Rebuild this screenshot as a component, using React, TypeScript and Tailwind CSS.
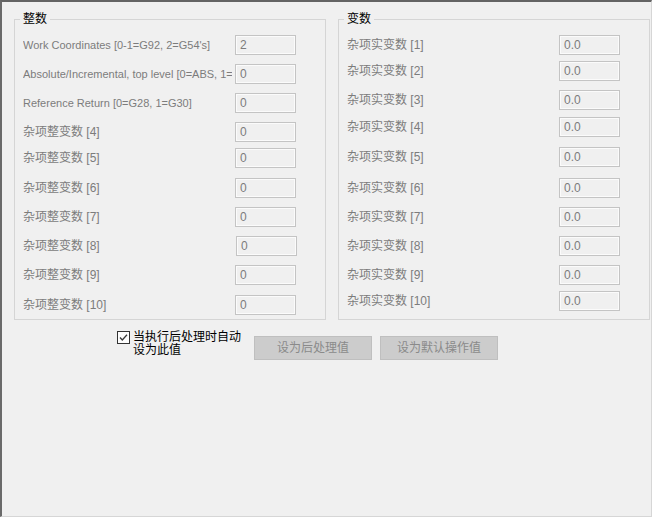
const FONT = "font-['Liberation_Sans','Noto_Sans_CJK_SC',sans-serif]";

type Row = { label: string; value: string; gap: string; latin?: boolean; shift?: string };

const intRows: Row[] = [
  { label: "Work Coordinates [0-1=G92, 2=G54's]", value: "2", gap: "mt-0", latin: true },
  { label: "Absolute/Incremental, top level [0=ABS, 1=INC]", value: "0", gap: "mt-[9px]", latin: true },
  { label: "Reference Return [0=G28, 1=G30]", value: "0", gap: "mt-[9px]", latin: true },
  { label: "杂项整变数 [4]", value: "0", gap: "mt-[9px]" },
  { label: "杂项整变数 [5]", value: "0", gap: "mt-[6px]" },
  { label: "杂项整变数 [6]", value: "0", gap: "mt-[10px]" },
  { label: "杂项整变数 [7]", value: "0", gap: "mt-[9px]" },
  { label: "杂项整变数 [8]", value: "0", gap: "mt-[9px]", shift: "ml-px" },
  { label: "杂项整变数 [9]", value: "0", gap: "mt-[9px]" },
  { label: "杂项整变数 [10]", value: "0", gap: "mt-[10px]" },
];

const realRows: Row[] = [
  { label: "杂项实变数 [1]", value: "0.0", gap: "mt-0" },
  { label: "杂项实变数 [2]", value: "0.0", gap: "mt-[6px]" },
  { label: "杂项实变数 [3]", value: "0.0", gap: "mt-[9px]" },
  { label: "杂项实变数 [4]", value: "0.0", gap: "mt-[7px]" },
  { label: "杂项实变数 [5]", value: "0.0", gap: "mt-[10px]" },
  { label: "杂项实变数 [6]", value: "0.0", gap: "mt-[11px]" },
  { label: "杂项实变数 [7]", value: "0.0", gap: "mt-[9px]" },
  { label: "杂项实变数 [8]", value: "0.0", gap: "mt-[9px]" },
  { label: "杂项实变数 [9]", value: "0.0", gap: "mt-[9px]" },
  { label: "杂项实变数 [10]", value: "0.0", gap: "mt-[6px]" },
];

function Field({ row }: { row: Row }) {
  return (
    <div className={`flex h-[20px] items-center ${row.gap}`}>
      <div className="w-[212px] shrink-0">
        <div
          className={`w-[209px] overflow-hidden whitespace-nowrap leading-[14px] text-[#7c7c7c] ${row.latin ? "text-[11px]" : "text-[12px]"}`}
        >
          {row.label}
        </div>
      </div>
      <div
        className={`flex h-[20px] w-[61px] items-center border border-[#c4c4c4] bg-[#f0f0f0] pl-[4px] text-[12px] text-[#7c7c7c] shadow-[inset_0_0_0_1px_#fbfbfb] ${row.shift ?? ""}`}
      >
        {row.value}
      </div>
    </div>
  );
}

function Group({ title, rows }: { title: string; rows: Row[] }) {
  return (
    <fieldset className="w-[312px] border border-[#d5d5d5] pb-[4px] pl-[8px]">
      <legend className="-ml-[3px] px-[3px] text-[12px] leading-[14px] text-black">
        {title}
      </legend>
      <div className="mt-[9px] flex flex-col">
        {rows.map((r) => (
          <Field key={r.label} row={r} />
        ))}
      </div>
    </fieldset>
  );
}

export default function App() {
  return (
    <div
      className={`${FONT} flex h-[517px] w-[652px] flex-col border-t-2 border-l-2 border-r border-b border-t-[#646464] border-l-[#6a6a6a] border-r-[#d6d6d6] border-b-[#d6d6d6] bg-[#f0f0f0] pl-[12px] pt-[10px]`}
    >
      <div className="flex gap-[12px]">
        <Group title="整数" rows={intRows} />
        <Group title="变数" rows={realRows} />
      </div>

      <div className="ml-[103px] mt-[10px] flex items-start">
        <div className="flex items-start">
          <svg width="13" height="13" viewBox="0 0 13 13" className="mt-[1px] shrink-0">
            <rect x="0.5" y="0.5" width="12" height="12" fill="#fdfdfd" stroke="#333333" />
            <path d="M3 6.5 L5.3 9 L10 3.8" fill="none" stroke="#3a3a3a" strokeWidth="1.3" />
          </svg>
          <div className="ml-[3px] mt-px text-[12px] leading-[13px] text-black">
            当执行后处理时自动
            <br />
            设为此值
          </div>
        </div>
        <button className="ml-[13px] mt-[6px] h-[24px] w-[118px] border border-[#bfbfbf] bg-[#cccccc] text-[12px] text-[#8a8a8a]">
          设为后处理值
        </button>
        <button className="ml-[8px] mt-[6px] h-[24px] w-[118px] border border-[#bfbfbf] bg-[#cccccc] text-[12px] text-[#8a8a8a]">
          设为默认操作值
        </button>
      </div>
    </div>
  );
}
